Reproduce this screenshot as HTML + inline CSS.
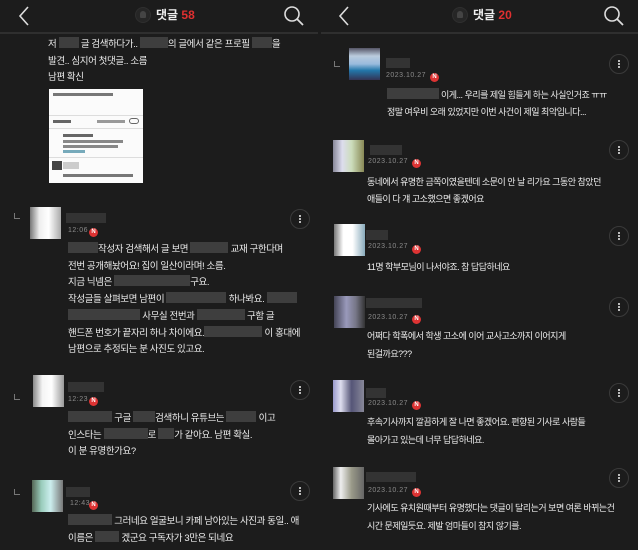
<!DOCTYPE html>
<html><head><meta charset="utf-8"><style>
*{margin:0;padding:0;box-sizing:border-box}
body{width:638px;height:550px;background:#1c1c1c;position:relative;overflow:hidden;font-family:"Liberation Sans","Noto Sans CJK KR",sans-serif;color:#e6e6e6}
.a{position:absolute}
.hl{position:absolute;top:32px;height:2px;background:#2f2f2f}
.t{position:absolute;font-size:9.5px;letter-spacing:-0.4px;line-height:17px;white-space:nowrap;color:#ececec}
.rt .t{font-size:9px;letter-spacing:-0.5px}
.b{display:inline-block;height:11px;background:#3e3e3e;vertical-align:-1px}
.tm{position:absolute;font-size:7px;color:#8a8a8a;letter-spacing:.5px;white-space:nowrap}
.n{position:absolute;width:9px;height:9px;border-radius:50%;background:#d33;color:#fff;font-size:6px;line-height:9px;text-align:center;font-weight:bold}
.k{position:absolute;width:20px;height:20px;border-radius:50%;border:1px solid #3a3a3a}
.k:after{content:"";position:absolute;left:8px;top:5px;width:2px;height:2px;background:#bbb;box-shadow:0 3px 0 #bbb,0 6px 0 #bbb}
.r{position:absolute;width:6px;height:6px;border-left:1px solid #777;border-bottom:1px solid #777}
.av{position:absolute;width:31px;height:32px}
.nm{position:absolute;height:10px;background:#333}
.bell{position:absolute;width:16px;height:16px;border-radius:50%;background:#262626;border:1px solid #2f2f2f}
.bell:after{content:"";position:absolute;left:4px;top:3px;width:6px;height:7px;background:#444;border-radius:3px 3px 1px 1px}
.ttl{position:absolute;font-size:12px;font-weight:bold;color:#eee}
.ttl span{color:#e03030}
</style></head><body>
<!-- LEFT HEADER -->
<svg class="a" style="left:16px;top:5px" width="16" height="22"><path d="M12 2 L4 11 L12 20" stroke="#ddd" stroke-width="1.6" fill="none"/></svg>
<div class="bell" style="left:135px;top:7px"></div>
<div class="ttl" style="left:156px;top:6px">댓글 <span>58</span></div>
<svg class="a" style="left:283px;top:5px" width="22" height="22"><circle cx="9" cy="9" r="7" stroke="#ddd" stroke-width="1.6" fill="none"/><path d="M14 14 L20 20" stroke="#ddd" stroke-width="1.8"/></svg>
<div class="hl" style="left:0;width:318px"></div>
<!-- RIGHT HEADER -->
<svg class="a" style="left:336px;top:5px" width="16" height="22"><path d="M12 2 L4 11 L12 20" stroke="#ddd" stroke-width="1.6" fill="none"/></svg>
<div class="bell" style="left:452px;top:7px"></div>
<div class="ttl" style="left:473px;top:6px">댓글 <span>20</span></div>
<svg class="a" style="left:603px;top:5px" width="22" height="22"><circle cx="9" cy="9" r="7" stroke="#ddd" stroke-width="1.6" fill="none"/><path d="M14 14 L20 20" stroke="#ddd" stroke-width="1.8"/></svg>
<div class="hl" style="left:321px;width:317px"></div>

<!-- LEFT top text -->
<div class="t" style="left:48px;top:36px">저 <span class="b" style="width:20px"></span> 글 검색하다가.. <span class="b" style="width:28px"></span>의 글에서 같은 프로필 <span class="b" style="width:20px"></span>을</div>
<div class="t" style="left:48px;top:53px">발견.. 심지어 첫댓글.. 소름</div>
<div class="t" style="left:48px;top:69px">남편 확신</div>
<div class="a" style="left:49px;top:89px;width:94px;height:94px;background:#fbfbfb">
 <div class="a" style="left:4px;top:4px;width:60px;height:3px;background:#777"></div>
 <div class="a" style="left:0;top:26px;width:94px;height:1px;background:#ddd"></div>
 <div class="a" style="left:4px;top:31px;width:18px;height:3px;background:#666"></div>
 <div class="a" style="left:48px;top:31px;width:28px;height:3px;background:#999"></div>
 <div class="a" style="left:80px;top:29px;width:10px;height:6px;border-radius:3px;border:1px solid #666"></div>
 <div class="a" style="left:0;top:39px;width:94px;height:1px;background:#ddd"></div>
 <div class="a" style="left:14px;top:45px;width:30px;height:3px;background:#666"></div>
 <div class="a" style="left:14px;top:51px;width:60px;height:3px;background:#888"></div>
 <div class="a" style="left:14px;top:56px;width:55px;height:3px;background:#888"></div>
 <div class="a" style="left:14px;top:61px;width:22px;height:3px;background:#7ab"></div>
 <div class="a" style="left:0;top:68px;width:94px;height:1px;background:#ddd"></div>
 <div class="a" style="left:3px;top:72px;width:10px;height:9px;background:#444"></div>
 <div class="a" style="left:14px;top:73px;width:16px;height:7px;background:#ccc"></div>
 <div class="a" style="left:14px;top:85px;width:70px;height:3px;background:#777"></div>
</div>

<!-- LEFT comment 1 -->
<div class="r" style="left:14px;top:213px"></div>
<div class="av" style="left:30px;top:207px;background:linear-gradient(90deg,#777,#eee 30%,#fff 60%,#aaa)"></div>
<div class="nm" style="left:66px;top:213px;width:40px"></div>
<div class="tm" style="left:68px;top:227px">12:06</div><div class="n" style="left:89px;top:228px">N</div>
<div class="k" style="left:290px;top:209px"></div>
<div class="t" style="left:68px;top:241px"><span class="b" style="width:30px"></span>작성자 검색해서 글 보면 <span class="b" style="width:38px"></span> 교재 구한다며</div>
<div class="t" style="left:68px;top:258px">전번 공개해놨어요! 집이 일산이라며! 소름.</div>
<div class="t" style="left:68px;top:274px">지금 닉넴은 <span class="b" style="width:76px"></span>구요.</div>
<div class="t" style="left:68px;top:291px">작성글들 살펴보면 남편이 <span class="b" style="width:60px"></span> 하나봐요. <span class="b" style="width:30px"></span></div>
<div class="t" style="left:68px;top:308px"><span class="b" style="width:72px"></span> 사무실 전번과 <span class="b" style="width:48px"></span> 구함 글</div>
<div class="t" style="left:68px;top:325px">핸드폰 번호가 끝자리 하나 차이에요.<span class="b" style="width:58px"></span> 이 홍대에</div>
<div class="t" style="left:68px;top:341px">남편으로 추정되는 분 사진도 있고요.</div>

<!-- LEFT comment 2 -->
<div class="r" style="left:14px;top:394px"></div>
<div class="av" style="left:33px;top:375px;background:linear-gradient(90deg,#888,#f4f4f4 30%,#fff 60%,#999)"></div>
<div class="nm" style="left:68px;top:382px;width:36px"></div>
<div class="tm" style="left:68px;top:396px">12:23</div><div class="n" style="left:89px;top:397px">N</div>
<div class="k" style="left:290px;top:380px"></div>
<div class="t" style="left:68px;top:410px"><span class="b" style="width:44px"></span> 구글 <span class="b" style="width:22px"></span>검색하니 유튜브는 <span class="b" style="width:30px"></span> 이고</div>
<div class="t" style="left:68px;top:427px">인스타는 <span class="b" style="width:44px"></span>로 <span class="b" style="width:16px"></span>가 같아요. 남편 확실.</div>
<div class="t" style="left:68px;top:443px">이 분 유명한가요?</div>

<!-- LEFT comment 3 -->
<div class="r" style="left:14px;top:489px"></div>
<div class="av" style="left:32px;top:480px;background:linear-gradient(90deg,#565,#9cb 30%,#cee 60%,#777)"></div>
<div class="nm" style="left:66px;top:487px;width:24px"></div>
<div class="tm" style="left:70px;top:500px">12:43</div><div class="n" style="left:89px;top:501px">N</div>
<div class="k" style="left:290px;top:481px"></div>
<div class="t" style="left:68px;top:513px"><span class="b" style="width:44px"></span> 그러네요 얼굴보니 카페 남아있는 사진과 동일.. 애</div>
<div class="t" style="left:68px;top:530px">이름은 <span class="b" style="width:24px"></span> 겠군요 구독자가 3만은 되네요</div>

<div class="rt">
<!-- RIGHT comment A -->
<div class="r" style="left:334px;top:61px"></div>
<div class="av" style="left:349px;top:48px;background:linear-gradient(180deg,#556 0,#bcd 25%,#9bd 50%,#27a 70%,#335)"></div>
<div class="nm" style="left:386px;top:58px;width:24px"></div>
<div class="tm" style="left:386px;top:72px">2023.10.27</div><div class="n" style="left:430px;top:73px">N</div>
<div class="k" style="left:609px;top:54px"></div>
<div class="t" style="left:387px;top:87px"><span class="b" style="width:52px"></span> 이게... 우리를 제일 힘들게 하는 사실인거죠 ㅠㅠ</div>
<div class="t" style="left:387px;top:104px">정말 여우비 오래 있었지만 이번 사건이 제일 최악입니다...</div>

<!-- RIGHT comment B -->
<div class="av" style="left:333px;top:140px;background:linear-gradient(90deg,#889,#dde 30%,#cdb 60%,#885)"></div>
<div class="nm" style="left:370px;top:145px;width:32px"></div>
<div class="tm" style="left:368px;top:158px">2023.10.27</div><div class="n" style="left:412px;top:159px">N</div>
<div class="k" style="left:609px;top:140px"></div>
<div class="t" style="left:367px;top:174px">동네에서 유명한 금쪽이였을텐데 소문이 안 날 리가요 그동안 참았던</div>
<div class="t" style="left:367px;top:191px">애들이 다 걔 고소했으면 좋겠어요</div>

<!-- RIGHT comment C -->
<div class="av" style="left:334px;top:224px;background:linear-gradient(90deg,#777,#fff 30%,#fff 60%,#8ab)"></div>
<div class="nm" style="left:366px;top:230px;width:22px"></div>
<div class="tm" style="left:368px;top:243px">2023.10.27</div><div class="n" style="left:412px;top:245px">N</div>
<div class="k" style="left:609px;top:226px"></div>
<div class="t" style="left:367px;top:259px">11명 학부모님이 나서야죠. 참 답답하네요</div>

<!-- RIGHT comment D -->
<div class="av" style="left:334px;top:296px;background:linear-gradient(90deg,#445,#99b 40%,#778 70%,#333)"></div>
<div class="nm" style="left:366px;top:298px;width:56px"></div>
<div class="tm" style="left:368px;top:314px">2023.10.27</div><div class="n" style="left:412px;top:315px">N</div>
<div class="k" style="left:609px;top:297px"></div>
<div class="t" style="left:367px;top:328px">어쩌다 학폭에서 학생 고소에 이어 교사고소까지 이어지게</div>
<div class="t" style="left:367px;top:346px">된걸까요???</div>

<!-- RIGHT comment E -->
<div class="av" style="left:333px;top:380px;background:linear-gradient(90deg,#99c,#dde 25%,#557 60%,#889)"></div>
<div class="nm" style="left:366px;top:388px;width:20px"></div>
<div class="tm" style="left:368px;top:400px">2023.10.27</div><div class="n" style="left:412px;top:401px">N</div>
<div class="k" style="left:609px;top:383px"></div>
<div class="t" style="left:367px;top:414px">후속기사까지 깔끔하게 잘 나면 좋겠어요. 편향된 기사로 사람들</div>
<div class="t" style="left:367px;top:432px">몰아가고 있는데 너무 답답하네요.</div>

<!-- RIGHT comment F -->
<div class="av" style="left:333px;top:467px;background:linear-gradient(90deg,#666,#eee 25%,#998 60%,#666)"></div>
<div class="nm" style="left:366px;top:472px;width:50px"></div>
<div class="tm" style="left:368px;top:487px">2023.10.27</div><div class="n" style="left:412px;top:488px">N</div>
<div class="k" style="left:609px;top:468px"></div>
<div class="t" style="left:367px;top:500px">기사에도 유치원때부터 유명했다는 댓글이 달리는거 보면 여론 바뀌는건</div>
<div class="t" style="left:367px;top:518px">시간 문제일듯요. 제발 엄마들이 참지 않기를.</div>
</div>
</body></html>
